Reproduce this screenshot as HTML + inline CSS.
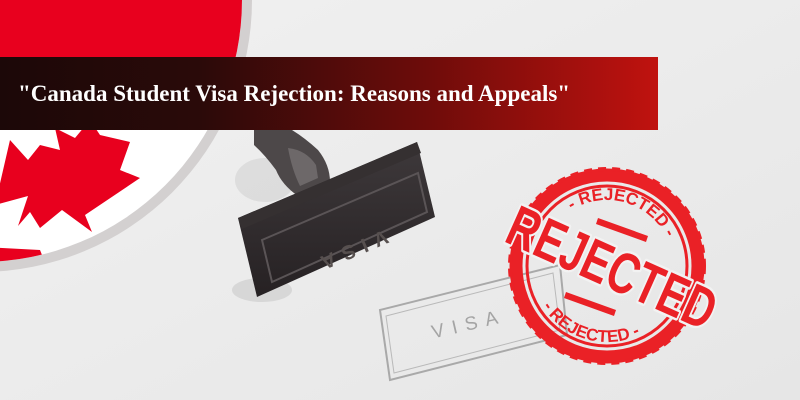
<!DOCTYPE html>
<html><head><meta charset="utf-8"><style>
html,body{margin:0;padding:0;width:800px;height:400px;overflow:hidden;background:#ececec}
svg{display:block}
</style></head><body>
<svg width="800" height="400" viewBox="0 0 800 400" xmlns="http://www.w3.org/2000/svg">
<defs>
<linearGradient id="bg" x1="0" y1="0" x2="1" y2="1"><stop offset="0" stop-color="#f1f1f1"/><stop offset="1" stop-color="#e6e6e6"/></linearGradient>
<linearGradient id="ban" x1="0" y1="0" x2="1" y2="0"><stop offset="0" stop-color="#1c0808"/><stop offset="0.3" stop-color="#2a0a09"/><stop offset="0.65" stop-color="#6e0c0a"/><stop offset="1" stop-color="#c0120f"/></linearGradient>
<clipPath id="cc"><circle cx="-20" cy="0" r="262"/></clipPath>
<linearGradient id="blk" x1="0" y1="0" x2="0" y2="1"><stop offset="0" stop-color="#3e393b"/><stop offset="1" stop-color="#262123"/></linearGradient>
<path id="arcTop" d="M541,266 A66,66 0 0 1 673,266"/>
<path id="arcBot" d="M531,266 A76,76 0 0 0 683,266"/>
</defs>
<rect width="800" height="400" fill="url(#bg)"/>
<circle cx="-20" cy="0" r="272" fill="#d3d0d0"/>
<g clip-path="url(#cc)">
<rect x="-300" y="-300" width="600" height="600" fill="#fff"/>
<polygon points="-300,-300 300,-300 300,60 -300,130" fill="#e8001e"/>
<polygon points="-300,232 40,250 100,400 -300,400" fill="#e8001e"/>
<path d="M10,140 L28,160 L40,145 L60,150 L55,128 L75,138 L90,120 L100,135 L130,142 L120,170 L140,178 L85,215 L92,232 L62,210 L40,228 L30,212 L18,226 L28,196 L-5,205 Z" fill="#e8001e"/>
</g>
<rect x="0" y="57" width="658" height="73" fill="url(#ban)"/>
<text x="18" y="101" fill="#fff" font-family="Liberation Serif, serif" font-weight="bold" font-size="23">"Canada Student Visa Rejection: Reasons and Appeals"</text>
<ellipse cx="262" cy="290" rx="30" ry="12" fill="#cfcfcf" opacity="0.7"/>
<ellipse cx="265" cy="180" rx="30" ry="22" fill="#d6d6d6" opacity="0.7"/>
<path d="M254,130 L292,130 Q305,138 318,150 Q330,165 330,182 L298,196 Q282,185 276,170 Q265,155 254,145 Z" fill="#4d4849"/>
<path d="M288,148 Q306,150 316,165 L318,178 L300,186 Q292,170 288,148 Z" fill="#6d6869"/>
<polygon points="238,218 417,142 435,217 257,297" fill="url(#blk)"/>
<polygon points="238,218 417,142 421,153 242,229" fill="#353031"/>
<polygon points="262,240 418,173 427,212 272,282" fill="none" stroke="#5a5456" stroke-width="2"/>
<text transform="translate(348,245) rotate(-23) rotate(180)" text-anchor="middle" font-family="Liberation Sans, sans-serif" font-weight="bold" font-size="20" fill="#57504f" letter-spacing="8">VISA</text>
<polygon points="380,310 560,265 567,335 390,380" fill="none" stroke="#a9a9a9" stroke-width="2"/>
<polygon points="386,316 553,273 560,330 394,373" fill="none" stroke="#b9b9b9" stroke-width="1"/>
<text transform="translate(470,330) rotate(-13)" text-anchor="middle" font-family="Liberation Sans, sans-serif" font-size="19" fill="#a4a4a4" letter-spacing="8">VISA</text>
<g fill="none" stroke="#ea2126">
<circle cx="607" cy="266" r="91" stroke-width="13"/>
<circle cx="607" cy="266" r="97" stroke-width="4" stroke-dasharray="8 6"/>
<circle cx="607" cy="266" r="80" stroke-width="3"/>
</g>
<g fill="#ea2126" font-family="Liberation Sans, sans-serif" font-weight="bold">
<g transform="rotate(16 607 266)">
<text font-size="17" text-anchor="middle"><textPath href="#arcTop" startOffset="50%">- REJECTED -</textPath></text>
<text font-size="17" text-anchor="middle"><textPath href="#arcBot" startOffset="50%">- REJECTED -</textPath></text>
</g>
<polygon points="598,218 648,236 646,242 596,224" fill="#ea2126"/>
<polygon points="566,292 616,310 614,316 564,298" fill="#ea2126"/>
<text transform="translate(604,286) rotate(24)" text-anchor="middle" font-size="58" textLength="222" lengthAdjust="spacingAndGlyphs" stroke="#f2f2f2" stroke-width="5" paint-order="stroke" stroke-linejoin="round">REJECTED</text>
</g>
</svg>
</body></html>
